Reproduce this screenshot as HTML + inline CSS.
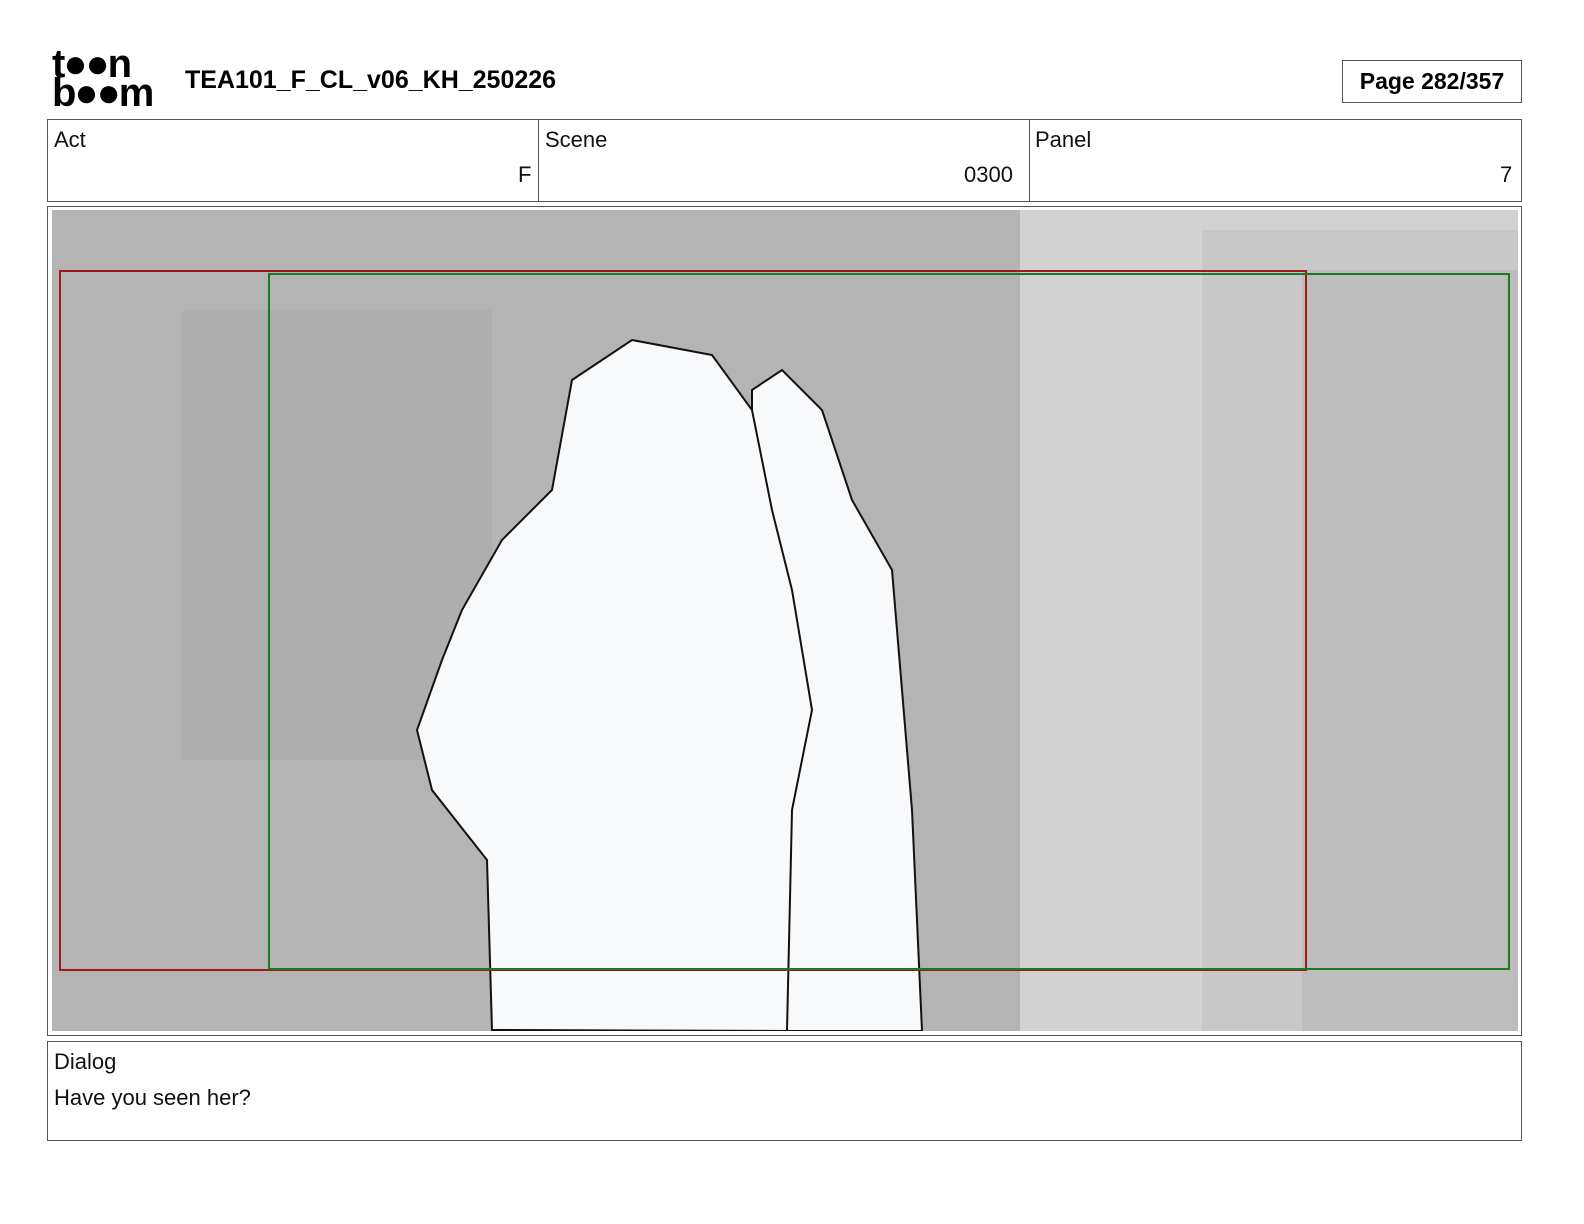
<!DOCTYPE html>
<html><head><meta charset="utf-8"><style>
body{margin:0;width:1584px;height:1224px;background:#fff;font-family:"Liberation Sans",sans-serif;position:relative;overflow:hidden}
.a{position:absolute}
.box{position:absolute;border:1px solid #555;box-sizing:border-box}
.lbl{font-size:22px;color:#111}
</style></head><body>
<div class="a" style="left:52px;top:50px;font-weight:bold;font-size:40px;line-height:29px;letter-spacing:-2px">t●●n<br>b●●m</div>
<div class="a" style="left:185px;top:66px;font-weight:bold;font-size:25px">TEA101_F_CL_v06_KH_250226</div>
<div class="box" style="left:1342px;top:60px;width:180px;height:43px;font-weight:bold;font-size:23px;text-align:center;line-height:41px">Page 282/357</div>
<div class="box" style="left:47px;top:119px;width:1475px;height:83px"></div>
<div class="a" style="left:538px;top:120px;width:1px;height:81px;background:#555"></div>
<div class="a" style="left:1029px;top:120px;width:1px;height:81px;background:#555"></div>
<div class="a lbl" style="left:54px;top:127px">Act</div>
<div class="a lbl" style="left:545px;top:127px">Scene</div>
<div class="a lbl" style="left:1035px;top:127px">Panel</div>
<div class="a lbl" style="left:518px;top:162px">F</div>
<div class="a lbl" style="left:964px;top:162px">0300</div>
<div class="a lbl" style="left:1500px;top:162px">7</div>
<div class="box" style="left:47px;top:206px;width:1475px;height:830px"></div>
<svg class="a" style="left:52px;top:210px" width="1466" height="821">
<rect width="1466" height="821" fill="#b4b4b4"/>
<rect x="968" width="498" height="821" fill="#d2d2d2"/>
<rect x="1150" y="20" width="316" height="801" fill="#c8c8c8"/>
<rect x="1250" y="60" width="216" height="761" fill="#bdbdbd"/>
<rect x="130" y="100" width="310" height="450" fill="#aeaeae"/>
<path d="M700 180 L730 160 L770 200 L800 290 L840 360 L850 480 L860 600 L870 821 L700 821 Z" fill="#f8f9fb" stroke="#111" stroke-width="2"/>
<path d="M440 820 L435 650 L380 580 L365 520 L390 450 L410 400 L450 330 L500 280 L520 170 L580 130 L660 145 L700 200 L720 300 L740 380 L760 500 L740 600 L735 821 Z" fill="#f8f9fb" stroke="#111" stroke-width="2"/>
<rect x="8" y="61" width="1246" height="699" fill="none" stroke="#a01818" stroke-width="2"/>
<rect x="217" y="64" width="1240" height="695" fill="none" stroke="#1c7a1c" stroke-width="2"/>
</svg>
<div class="box" style="left:47px;top:1041px;width:1475px;height:100px"></div>
<div class="a lbl" style="left:54px;top:1049px">Dialog</div>
<div class="a lbl" style="left:54px;top:1085px">Have you seen her?</div>
</body></html>
